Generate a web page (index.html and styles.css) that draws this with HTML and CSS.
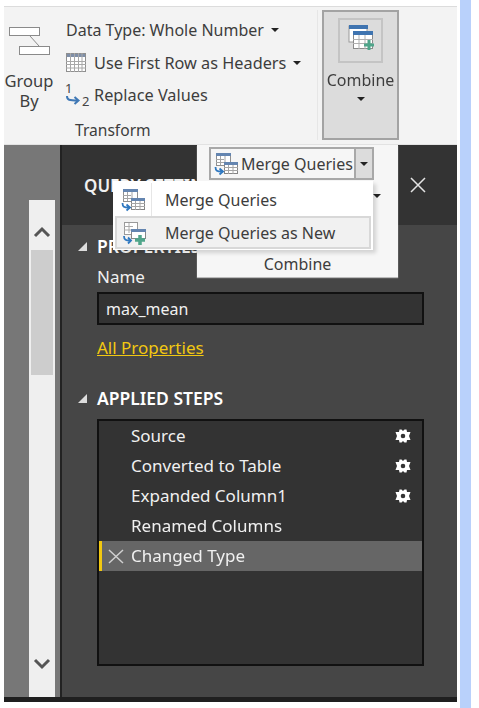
FILE: index.html
```html
<!DOCTYPE html>
<html>
<head>
    <title>Merge Queries</title>
    <link rel="stylesheet" href="styles.css">
</head>
<body>
    <svg class="defs" width="0" height="0">
        <symbol id="gear" viewBox="0 0 16 14">
            <path fill-rule="evenodd" d="M4.500 0.500H6.500L8 2L9.500 0.500H11.500L12 3H15.500L14 7L15.500 11H12L11.500 13.500H9.500L8 12L6.500 13.500H4.500L4 11H0.500L2 7L0.500 3H4Z M8 4.700A2.300 2.300 0 1 0 8 9.300A2.300 2.300 0 1 0 8 4.700Z" fill="#fff"/>
        </symbol>
        <symbol id="merge" viewBox="0 0 24 24">
            <rect x="2.500" y="1.500" width="14" height="12" fill="#fff" stroke="#8f8f8f"/>
            <rect x="2" y="1" width="15" height="3" fill="#6485b0"/>
            <path d="M2 7.500H10M2 10.500H10M6.500 4V13M11 4V10" stroke="#a5a5a5"/>
            <rect x="10.500" y="10.500" width="13" height="11" fill="#fff" stroke="#858585"/>
            <rect x="10" y="10" width="14" height="3" fill="#6485b0"/>
            <path d="M10 15.500H24M10 18.500H24M14.500 13V22M19 13V22" stroke="#a5a5a5"/>
            <path d="M1.500 15C1.500 19 3 19.500 8 19.500M5.500 16.500L9 19.500L5.500 22.500" fill="none" stroke="#2f78c0" stroke-width="1.800"/>
        </symbol>
    </svg>
    <div class="window">
        <div class="ribbon">
            <div class="group-by">
                <svg class="group-icon" width="50" height="34" viewBox="0 0 50 34">
                    <rect x="5.500" y="1.500" width="30" height="8" fill="#fff" stroke="#8a8a8a"/>
                    <rect x="15.500" y="20.500" width="30" height="8" fill="#fff" stroke="#8a8a8a"/>
                    <path d="M26 10 L35 20" stroke="#8a8a8a" fill="none"/>
                </svg>
                <div class="group-label">Group<br>By</div>
            </div>
            <div class="transform">
                <div class="tool-row">
                    <span class="tool-text data-type">Data Type: Whole Number</span><span class="caret"></span>
                </div>
                <div class="tool-row">
                    <svg class="tool-icon" width="20" height="20" viewBox="0 0 20 20">
                        <rect x="0.500" y="0.500" width="19" height="18" fill="#fff" stroke="#8f8f8f"/>
                        <rect x="1" y="1" width="18" height="3" fill="#7f8fa8"/>
                        <path d="M0 8.500H20M0 11.500H20M0 15H20M4.500 0V19M8.500 0V19M12.500 0V19M16 0V19" stroke="#a8a8a8"/>
                    </svg>
                    <span class="tool-text">Use First Row as Headers</span><span class="caret"></span>
                </div>
                <div class="tool-row">
                    <svg class="tool-icon swap-icon" width="28" height="28" viewBox="0 0 28 28">
                        <text x="1" y="12" class="swap-num">1</text>
                        <text x="18" y="25" class="swap-num">2</text>
                        <path d="M3 15C3 19 5 19.500 14 19.500M10.500 16L14.500 19.500L10.500 23" fill="none" stroke="#3f78b5" stroke-width="2"/>
                    </svg>
                    <span class="tool-text">Replace Values</span>
                </div>
                <div class="group-name">Transform</div>
            </div>
            <div class="separator"></div>
            <div class="combine">
                <div class="combine-icon">
                    <svg width="26" height="26" viewBox="0 0 26 26">
                        <rect x="1" y="1" width="18" height="16" fill="#fff" stroke="#9a9a9a"/>
                        <rect x="1" y="0" width="19" height="4" fill="#3f74b0"/>
                        <rect x="5.500" y="6.500" width="19" height="17" fill="#fff" stroke="#8a8a8a"/>
                        <rect x="5" y="6" width="20" height="4" fill="#3f74b0"/>
                        <path d="M5 14.500H25M5 18.500H25M11 10V24M17 10V24" stroke="#b0b0b0"/>
                        <path d="M21 15V25M16 20H26" stroke="#4fa58a" stroke-width="3"/>
                    </svg>
                </div>
                <div class="combine-label">Combine</div>
                <span class="caret"></span>
            </div>
        </div>
        <div class="main">
            <div class="side">
                <div class="scrollbar">
                    <div class="scroll-btn scroll-up">
                        <svg width="18" height="12" viewBox="0 0 18 12"><path d="M2 10L9 3L16 10" fill="none" stroke="#555" stroke-width="3"/></svg>
                    </div>
                    <div class="scroll-thumb"></div>
                    <div class="scroll-track"></div>
                    <div class="scroll-btn scroll-down">
                        <svg width="18" height="12" viewBox="0 0 18 12"><path d="M2 2L9 9L16 2" fill="none" stroke="#555" stroke-width="3"/></svg>
                    </div>
                </div>
            </div>
            <div class="panel">
                <div class="panel-head">
                    <span class="panel-title">QUERY SETTINGS</span>
                    <svg class="panel-close" width="18" height="18" viewBox="0 0 18 18"><path d="M2 2L16 16M16 2L2 16" stroke="#e4e4e4" stroke-width="1.500"/></svg>
                </div>
                <div class="panel-body">
                    <div class="section-title"><span class="tri"></span>PROPERTIES</div>
                    <div class="field-label">Name</div>
                    <div class="name-input">max_mean</div>
                    <a class="all-props" href="#">All Properties</a>
                    <div class="section-title steps-title"><span class="tri"></span>APPLIED STEPS</div>
                    <div class="steps">
                        <div class="step"><span>Source</span><svg class="gear" width="16" height="14"><use href="#gear"/></svg></div>
                        <div class="step"><span>Converted to Table</span><svg class="gear" width="16" height="14"><use href="#gear"/></svg></div>
                        <div class="step"><span>Expanded Column1</span><svg class="gear" width="16" height="14"><use href="#gear"/></svg></div>
                        <div class="step"><span>Renamed Columns</span></div>
                        <div class="step step-active">
                            <svg class="step-x" width="16" height="16" viewBox="0 0 16 16"><path d="M1 2L15 15M15 2L1 15" stroke="#d0d0d0" stroke-width="1.500"/></svg>
                            <span>Changed Type</span>
                        </div>
                    </div>
                </div>
            </div>
        </div>
        <div class="foot"></div>

        <div class="combine-menu">
            <div class="merge-btn">
                <svg class="merge-icon" width="24" height="24"><use href="#merge"/></svg>
                <span>Merge Queries</span>
                <div class="merge-split"><span class="caret"></span></div>
            </div>
            <span class="caret append-caret"></span>
            <div class="menu-label">Combine</div>
        </div>

        <div class="sub-menu">
            <div class="sub-item">
                <div class="sub-icon">
                    <svg width="24" height="24"><use href="#merge"/></svg>
                </div>
                <span>Merge Queries</span>
            </div>
            <div class="sub-item sub-item-hover">
                <div class="sub-icon">
                    <svg width="24" height="24" viewBox="0 0 24 24">
                        <rect x="1.500" y="1.500" width="13" height="12" fill="#fff" stroke="#999"/>
                        <path d="M1 5.500H10M1 9H8M6 2V12" stroke="#aaa"/>
                        <rect x="8.500" y="8.500" width="14" height="9" fill="#fff" stroke="#888"/>
                        <rect x="8" y="8" width="15" height="3" fill="#6485b0"/>
                        <path d="M1 15C1 19 3 19.500 7 19.500M5 16.500L8 19.500L5 22.500" fill="none" stroke="#2f78c0" stroke-width="1.800"/>
                        <path d="M17 14V24M12 19H22" stroke="#4fa58a" stroke-width="3.500"/>
                    </svg>
                </div>
                <span>Merge Queries as New</span>
            </div>
        </div>
    </div>
    <div class="blue-strip"></div>
</body>
</html>
```

FILE: styles.css
```css
html, body {
    margin: 0;
    height: 708px;
    overflow: hidden;
}

body {
    display: flex;
    background-color: #fff;
    font-family: "Noto Sans", "Open Sans", sans-serif;
    font-size: 16px;
    color: #333;
}

.defs {
    position: absolute;
}

.window {
    position: relative;
    width: 453px;
    height: 702px;
    margin-left: 4px;
    padding-top: 6px;
    box-sizing: border-box;
    display: flex;
    flex-direction: column;
    filter: blur(0.45px);
}

.blue-strip {
    width: 11px;
    height: 708px;
    margin-left: 3px;
    background-color: #b9d1fb;
}

.caret {
    display: inline-block;
    width: 0;
    height: 0;
    border-left: 4px solid transparent;
    border-right: 4px solid transparent;
    border-top: 4px solid #222;
}

/* ribbon */
.ribbon {
    height: 139px;
    flex-shrink: 0;
    box-sizing: border-box;
    border-top: 1px solid #dcdcdc;
    border-bottom: 1px solid #e2e2e2;
    background-color: #f3f3f3;
    display: flex;
    color: #3d3d3d;
}

.group-by {
    width: 50px;
    padding-top: 19px;
    text-align: center;
    flex-shrink: 0;
}

.group-icon {
    display: block;
    margin-bottom: 11px;
}

.group-label {
    font-size: 16.5px;
    line-height: 20px;
}

.transform {
    width: 263px;
    padding: 7px 0 0 12px;
    box-sizing: border-box;
    flex-shrink: 0;
}

.tool-row {
    height: 32.5px;
    display: flex;
    align-items: center;
    white-space: nowrap;
    font-size: 16.3px;
}

.tool-row .caret {
    margin-left: 7px;
}

.data-type {
    font-size: 16px;
}

.tool-icon {
    margin-right: 8px;
    flex-shrink: 0;
}

.swap-icon {
    margin: 0 2px 0 -2px;
    overflow: visible;
}

.swap-num {
    font-size: 13px;
    fill: #444;
}

.group-name {
    margin: 7px 0 0 9px;
    font-size: 15.6px;
}

.separator {
    width: 1px;
    height: 130px;
    margin-top: 3px;
    background-color: #e6e6e6;
}

.combine {
    width: 77px;
    height: 130px;
    margin: 3px 0 0 4px;
    box-sizing: border-box;
    border: 2px solid #a3a3a3;
    background-color: #dcdcdc;
    display: flex;
    flex-direction: column;
    align-items: center;
}

.combine-icon {
    width: 45px;
    height: 45px;
    margin-top: 6px;
    box-sizing: border-box;
    border: 2px solid #c4c4c4;
    display: flex;
    justify-content: center;
    padding-top: 5px;
}

.combine-label {
    margin-top: 5px;
    line-height: 24px;
}

.combine .caret {
    margin-top: 5px;
}

/* main area */
.main {
    flex: 1;
    display: flex;
    min-height: 0;
}

.side {
    width: 51px;
    background-color: #777;
    border-right: 2px solid #222;
    flex-shrink: 0;
    padding: 55px 5px 0 0;
    display: flex;
    justify-content: flex-end;
}

.scrollbar {
    width: 26px;
    background-color: #efefef;
    display: flex;
    flex-direction: column;
    align-items: center;
}

.scroll-btn {
    height: 50px;
    box-sizing: border-box;
    display: flex;
    justify-content: center;
    flex-shrink: 0;
}

.scroll-up {
    align-items: flex-end;
    padding-bottom: 12px;
}

.scroll-down {
    align-items: flex-start;
    padding-top: 11px;
}

.scroll-thumb {
    width: 22px;
    height: 125px;
    background-color: #cdcdcd;
}

.scroll-track {
    flex: 1;
}

.panel {
    flex: 1;
    background-color: #464646;
    color: #f0f0f0;
    min-width: 0;
    font-size: 17px;
}

.panel-head {
    height: 80px;
    background-color: #333;
    display: flex;
    align-items: center;
    justify-content: space-between;
    padding: 0 30px 0 22px;
    box-sizing: border-box;
}

.panel-title {
    font-weight: 600;
    white-space: nowrap;
}

.panel-body {
    padding: 11px 33px 0 35px;
}

.section-title {
    font-weight: 600;
    font-size: 17.5px;
    line-height: 20px;
    display: flex;
    align-items: center;
    margin-left: -19px;
    color: #fff;
}

.tri {
    width: 0;
    height: 0;
    margin-right: 10px;
    border-left: 9px solid transparent;
    border-bottom: 9px solid #ddd;
}

.field-label {
    margin-top: 10px;
    line-height: 22px;
}

.name-input {
    margin-top: 4px;
    height: 33px;
    box-sizing: border-box;
    border: 2px solid #111;
    background-color: #333;
    padding-left: 7px;
    line-height: 31px;
    font-size: 16px;
}

.all-props {
    display: block;
    margin-top: 11px;
    line-height: 24px;
    color: #f2c811;
}

.steps-title {
    margin-top: 28px;
}

.steps {
    margin-top: 11px;
    height: 247px;
    box-sizing: border-box;
    border: 2px solid #111;
    background-color: #333;
}

.step {
    height: 30px;
    box-sizing: border-box;
    padding: 0 11px 2px 32px;
    display: flex;
    align-items: center;
    justify-content: space-between;
}

.gear {
    margin-top: 2px;
}

.step-active {
    position: relative;
    justify-content: flex-start;
    background-color: #666;
    border-left: 3px solid #f2c811;
    padding-left: 29px;
}

.step-x {
    position: absolute;
    left: 6px;
    top: 7px;
}

.foot {
    height: 5px;
    flex-shrink: 0;
    background-color: #1f1f1f;
}

/* combine dropdown, sits over the panel */
.combine-menu {
    position: absolute;
    left: 193px;
    top: 145px;
    width: 201px;
    height: 132px;
    background-color: #f6f6f6;
    box-shadow: 0 1px 1px #bbb;
}

.merge-btn {
    position: absolute;
    left: 12px;
    top: 2px;
    width: 165px;
    height: 33px;
    box-sizing: border-box;
    border: 2px solid #a8a8a8;
    display: flex;
    align-items: center;
    white-space: nowrap;
    color: #3d3d3d;
}

.merge-icon {
    margin: 0 3px;
    flex-shrink: 0;
}

.merge-split {
    position: absolute;
    right: 0;
    top: 0;
    bottom: 0;
    width: 16px;
    background-color: #dcdcdc;
    border-left: 2px solid #a8a8a8;
    display: flex;
    align-items: center;
    justify-content: center;
}

.append-caret {
    position: absolute;
    left: 176px;
    top: 49px;
}

.menu-label {
    position: absolute;
    left: 0;
    right: 0;
    top: 108px;
    text-align: center;
    font-size: 16px;
    color: #3d3d3d;
}

.sub-menu {
    position: absolute;
    left: 109px;
    top: 181px;
    width: 260px;
    height: 69px;
    box-sizing: border-box;
    padding: 2px;
    background-color: #fff;
    box-shadow: 3px 3px 4px rgba(0, 0, 0, 0.15);
    color: #3d3d3d;
}

.sub-item {
    height: 33px;
    display: flex;
    align-items: center;
    white-space: nowrap;
}

.sub-item-hover {
    box-sizing: border-box;
    border: 2px solid #d8d8d8;
    background-color: #f1f1f1;
}

.sub-icon {
    width: 36px;
    height: 100%;
    display: flex;
    align-items: center;
    justify-content: center;
    margin-right: 13px;
    flex-shrink: 0;
    border-right: 1px solid #e6e6e6;
}

.sub-item-hover .sub-icon {
    border-right: none;
    margin-right: 12px;
}
```
